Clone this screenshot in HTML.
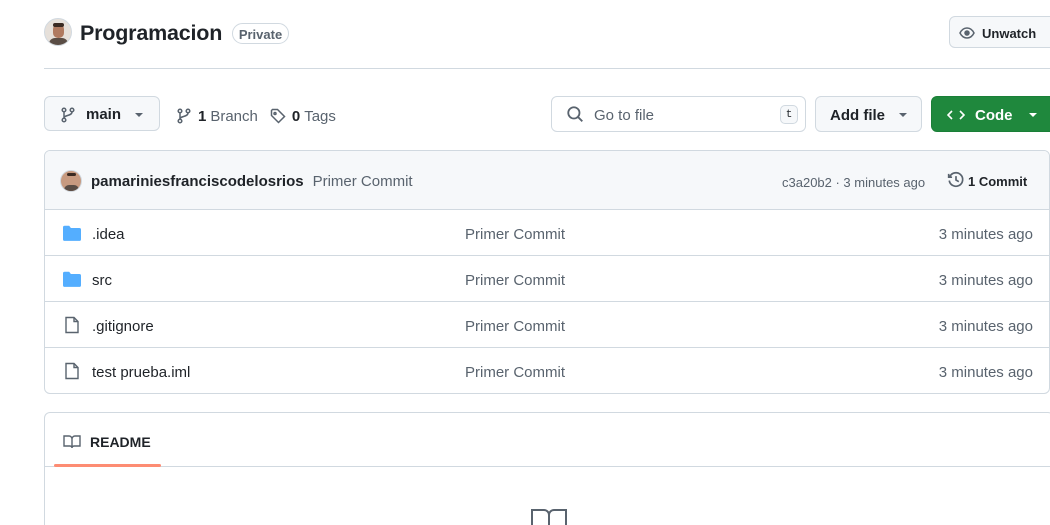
<!DOCTYPE html>
<html style="width:1050px;height:525px;overflow:hidden"><head><meta charset="utf-8"><style>
*{box-sizing:border-box;margin:0;padding:0}
body{width:1050px;height:525px;overflow:hidden;background:#fff;font-family:"Liberation Sans",sans-serif;color:#1f2328;position:relative;font-size:14px}
.a{position:absolute}
.btn{position:absolute;border:1px solid #d1d9e0;border-radius:6px;background:#f6f8fa;display:flex;align-items:center;font-weight:bold;font-size:15px;padding-top:2px}
.row{position:absolute;left:44px;width:1005px;height:46px;border-top:1px solid #d1d9e0;display:flex;align-items:center;font-size:15px;padding-top:3px}
.row svg{margin-top:-2px}
.muted{color:#59636e}
svg{display:block}
</style></head><body>
<div class="a" style="left:44px;top:18px;width:28px;height:28px;border-radius:50%;background:#e6e0da;border:1px solid #d1d9e0;overflow:hidden">
<div class="a" style="left:8px;top:5px;width:11px;height:14px;border-radius:5px;background:#b07a60"></div>
<div class="a" style="left:8px;top:4px;width:11px;height:4px;border-radius:3px;background:#3a2a22"></div>
<div class="a" style="left:4px;top:19px;width:19px;height:10px;border-radius:6px 6px 0 0;background:#5a4d45"></div></div>
<div class="a" style="left:80px;top:21px;font-size:21.5px;font-weight:bold;letter-spacing:-0.2px">Programacion</div>
<div class="a" style="left:232px;top:23px;width:57px;height:21px;border:1px solid #d1d9e0;border-radius:11px;font-size:13px;color:#59636e;font-weight:bold;text-align:center;line-height:21px">Private</div>
<div class="btn" style="left:949px;top:16px;width:110px;height:32px;font-size:13px;padding-left:9px">
<svg width="16" height="16" viewBox="0 0 16 16" fill="none" stroke="#59636e" stroke-width="1.5"><path d="M1 8c2-4 5-5 7-5s5 1 7 5c-2 4-5 5-7 5S3 12 1 8z"/><circle cx="8" cy="8" r="2" fill="#59636e"/></svg><span style="margin-left:7px">Unwatch</span></div>
<div class="a" style="left:44px;top:68px;width:1006px;height:1px;background:#d1d9e0"></div>

<div class="btn" style="left:44px;top:96px;width:116px;height:35px;padding-left:15px">
<svg width="16" height="16" viewBox="0 0 16 16" fill="none" stroke="#59636e" stroke-width="1.5"><circle cx="4" cy="3" r="1.8"/><circle cx="4" cy="13" r="1.8"/><circle cx="12" cy="3" r="1.8"/><path d="M4 5v6M12 5c0 4-8 3-8 6"/></svg>
<span style="margin-left:10px">main</span><span style="margin-left:14px;border:4px solid transparent;border-top:4px solid #59636e;margin-top:4px"></span></div>
<div class="a" style="left:176px;top:106px;display:flex;align-items:center;font-size:15px">
<svg width="16" height="16" viewBox="0 0 16 16" fill="none" stroke="#59636e" stroke-width="1.5"><circle cx="4" cy="3" r="1.8"/><circle cx="4" cy="13" r="1.8"/><circle cx="12" cy="3" r="1.8"/><path d="M4 5v6M12 5c0 4-8 3-8 6"/></svg>
<b style="margin-left:6px;margin-top:2px">1</b><span class="muted" style="margin-left:4px;margin-top:2px">Branch</span>
<svg style="margin-left:12px" width="16" height="16" viewBox="0 0 16 16" fill="none" stroke="#59636e" stroke-width="1.5"><path d="M1.5 2.5v5l7 7 6-6-7-7h-5z"/><circle cx="5" cy="5.5" r="1"/></svg>
<b style="margin-left:6px;margin-top:2px">0</b><span class="muted" style="margin-left:4px;margin-top:2px">Tags</span></div>
<div class="a" style="left:551px;top:96px;width:255px;height:36px;border:1px solid #d1d9e0;border-radius:6px;display:flex;align-items:center;padding-left:14px;font-size:15px">
<svg width="18" height="18" viewBox="0 0 16 16" fill="none" stroke="#59636e" stroke-width="1.6"><circle cx="7" cy="7" r="5"/><path d="M10.5 10.5l4 4"/></svg>
<span class="muted" style="margin-left:10px;margin-top:2px">Go to file</span>
<span class="a" style="left:228px;top:8px;width:18px;height:19px;border:1px solid #d1d9e0;border-radius:5px;font-family:'Liberation Mono',monospace;font-size:11px;text-align:center;line-height:19px;background:#f6f8fa">t</span></div>
<div class="btn" style="left:815px;top:96px;width:107px;height:36px;padding-left:14px">Add file<span style="margin-left:14px;border:4px solid transparent;border-top:4px solid #59636e;margin-top:4px"></span></div>
<div class="btn" style="left:931px;top:96px;width:125px;height:36px;background:#1f883d;border-color:#1a7f37;color:#fff;padding-left:15px">
<svg width="18" height="16" viewBox="0 0 18 16" fill="none" stroke="#fff" stroke-width="1.6"><path d="M5 4L1 8l4 4M13 4l4 4-4 4"/></svg>
<span style="margin-left:10px">Code</span><span style="margin-left:16px;border:4.5px solid transparent;border-top:4.5px solid #fff;margin-top:4px"></span></div>

<div class="a" style="left:44px;top:150px;width:1006px;height:244px;border:1px solid #d1d9e0;border-radius:6px;overflow:hidden">
<div style="height:59px;background:#f6f8fa;display:flex;align-items:center;padding-left:15px;font-size:15px;position:relative">
<div style="width:22px;height:22px;border-radius:50%;background:#c79a80;border:1px solid #d1d9e0;position:relative;overflow:hidden"><div class="a" style="left:3px;top:14px;width:15px;height:8px;background:#5a4d45;border-radius:5px 5px 0 0"></div><div class="a" style="left:6px;top:2px;width:9px;height:3px;background:#3a2a22;border-radius:2px"></div></div>
<b style="margin-left:9px;color:#1f2328;margin-top:2px">pamariniesfranciscodelosrios</b><span class="muted" style="margin-left:9px;margin-top:2px">Primer Commit</span>
<span class="a muted" style="left:737px;top:24px;font-size:13px">c3a20b2 · 3 minutes ago</span>
<span class="a" style="left:902px;top:20px;display:flex;align-items:center;font-size:13px;font-weight:bold"><svg width="18" height="18" viewBox="0 0 16 16" fill="none" stroke="#59636e" stroke-width="1.5"><path d="M2.5 5A6 6 0 1 1 2 8.5"/><path d="M1.5 2.5V5.5h3"/><path d="M8 4.5V8l2.5 1.5"/></svg><span style="margin-left:3px;margin-top:2px">1 Commit</span></span>
</div></div>
<div class="row" style="top:209px"><svg style="margin-left:19px" width="18" height="16" viewBox="0 0 16 14"><path d="M0 2a1.5 1.5 0 0 1 1.5-1.5h4l1.5 2h7.5A1.5 1.5 0 0 1 16 4v8.5A1.5 1.5 0 0 1 14.5 14h-13A1.5 1.5 0 0 1 0 12.5z" fill="#54aeff"/></svg><span style="margin-left:11px">.idea</span><span class="a muted" style="left:421px">Primer Commit</span><span class="a muted" style="right:16px">3 minutes ago</span></div>
<div class="row" style="top:255px"><svg style="margin-left:19px" width="18" height="16" viewBox="0 0 16 14"><path d="M0 2a1.5 1.5 0 0 1 1.5-1.5h4l1.5 2h7.5A1.5 1.5 0 0 1 16 4v8.5A1.5 1.5 0 0 1 14.5 14h-13A1.5 1.5 0 0 1 0 12.5z" fill="#54aeff"/></svg><span style="margin-left:11px">src</span><span class="a muted" style="left:421px">Primer Commit</span><span class="a muted" style="right:16px">3 minutes ago</span></div>
<div class="row" style="top:301px"><svg style="margin-left:20px" width="16" height="18" viewBox="0 0 16 18" fill="none" stroke="#59636e" stroke-width="1.4"><path d="M2 1.5h8l4 4v11H2z"/><path d="M10 1.5v4h4"/></svg><span style="margin-left:12px">.gitignore</span><span class="a muted" style="left:421px">Primer Commit</span><span class="a muted" style="right:16px">3 minutes ago</span></div>
<div class="row" style="top:347px"><svg style="margin-left:20px" width="16" height="18" viewBox="0 0 16 18" fill="none" stroke="#59636e" stroke-width="1.4"><path d="M2 1.5h8l4 4v11H2z"/><path d="M10 1.5v4h4"/></svg><span style="margin-left:12px">test prueba.iml</span><span class="a muted" style="left:421px">Primer Commit</span><span class="a muted" style="right:16px">3 minutes ago</span></div>

<div class="a" style="left:44px;top:412px;width:1010px;height:113px;border:1px solid #d1d9e0;border-bottom:none;border-radius:6px 6px 0 0;overflow:hidden">
<div class="a" style="left:0;top:53px;width:1010px;height:1px;background:#d1d9e0"></div>
<div class="a" style="left:9px;top:51px;width:107px;height:3px;background:#fd8c73;border-radius:2px"></div>
<div class="a" style="left:18px;top:20px;display:flex;align-items:center;font-weight:bold;font-size:14px"><svg width="18" height="16" viewBox="0 0 18 16" fill="none" stroke="#59636e" stroke-width="1.4"><path d="M1 2h5a3 3 0 0 1 3 3v9a2 2 0 0 0-2-2H1zM17 2h-5a3 3 0 0 0-3 3v9a2 2 0 0 1 2-2h6z"/></svg><span style="margin-left:9px;margin-top:1px">README</span></div>
<svg class="a" style="left:485px;top:95px" width="38" height="30" viewBox="0 0 38 30" fill="none" stroke="#59636e" stroke-width="2"><path d="M2 2h12a5 5 0 0 1 5 5v22a4 4 0 0 0-4-4H2zM36 2H24a5 5 0 0 0-5 5v22a4 4 0 0 1 4-4h13z"/></svg>
</div>
</body></html>
